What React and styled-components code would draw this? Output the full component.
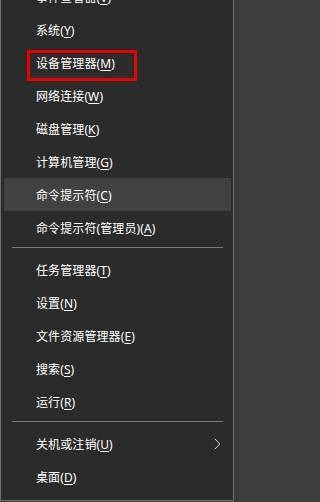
import React from "react";
import styled, { createGlobalStyle } from "styled-components";

const GlobalStyle = createGlobalStyle`
  html, body {
    margin: 0;
    padding: 0;
    background: #3c3c3c;
    overflow: hidden;
  }
  body {
    font-family: "Noto Sans", "Noto Sans CJK SC", sans-serif;
  }
`;

const Screen = styled.div`
  width: 235px;
  height: 502px;
  overflow: hidden;
`;

const Menu = styled.div`
  width: 227px;
  margin-top: -20px;
  background: #2b2b2b;
  border: 1px solid #707070;
  border-top: none;
  padding: 0 2px 7px 3px;
  box-sizing: content-box;
`;

const Row = styled.div`
  position: relative;
  display: flex;
  align-items: center;
  height: 33px;
  padding: 1px 10px 0 32px;
  box-sizing: border-box;
  color: #ffffff;
  font-size: 12px;
  letter-spacing: 0.1px;
  background: ${(p) => (p.$active ? "#414141" : "transparent")};
`;

const Label = styled.span`
  flex: 1;
  white-space: nowrap;
`;

const Key = styled.span`
  text-decoration: underline;
  text-underline-offset: 2px;
  text-decoration-thickness: 1px;
`;

const Separator = styled.div`
  height: 1px;
  margin: 3px 8px 5px;
  background: #7a7a7a;
`;

const Mark = styled.div`
  position: absolute;
  left: 23px;
  top: 4px;
  width: 110px;
  height: 31px;
  border: 3px solid #ee0000;
  box-sizing: border-box;
  pointer-events: none;
`;

const Chevron = () => (
  <svg width="7" height="12" viewBox="0 0 7 12">
    <polyline
      points="0.8,0.8 5.8,6 0.8,11.2"
      fill="none"
      stroke="#d8d8d8"
      strokeWidth="1"
    />
  </svg>
);

const items = [
  { text: "事件查看器", key: "V" },
  { text: "系统", key: "Y" },
  { text: "设备管理器", key: "M", marked: true },
  { text: "网络连接", key: "W" },
  { text: "磁盘管理", key: "K" },
  { text: "计算机管理", key: "G" },
  { text: "命令提示符", key: "C", active: true },
  { text: "命令提示符(管理员)", key: "A" },
  "sep",
  { text: "任务管理器", key: "T" },
  { text: "设置", key: "N" },
  { text: "文件资源管理器", key: "E" },
  { text: "搜索", key: "S" },
  { text: "运行", key: "R" },
  "sep",
  { text: "关机或注销", key: "U", sub: true },
  { text: "桌面", key: "D" },
];

export default function App() {
  return (
    <Screen>
      <GlobalStyle />
      <Menu>
        {items.map((item, i) =>
          item === "sep" ? (
            <Separator key={i} />
          ) : (
            <Row key={i} $active={item.active}>
              <Label>
                {item.text}(<Key>{item.key}</Key>)
              </Label>
              {item.sub && <Chevron />}
              {item.marked && <Mark />}
            </Row>
          )
        )}
      </Menu>
    </Screen>
  );
}
